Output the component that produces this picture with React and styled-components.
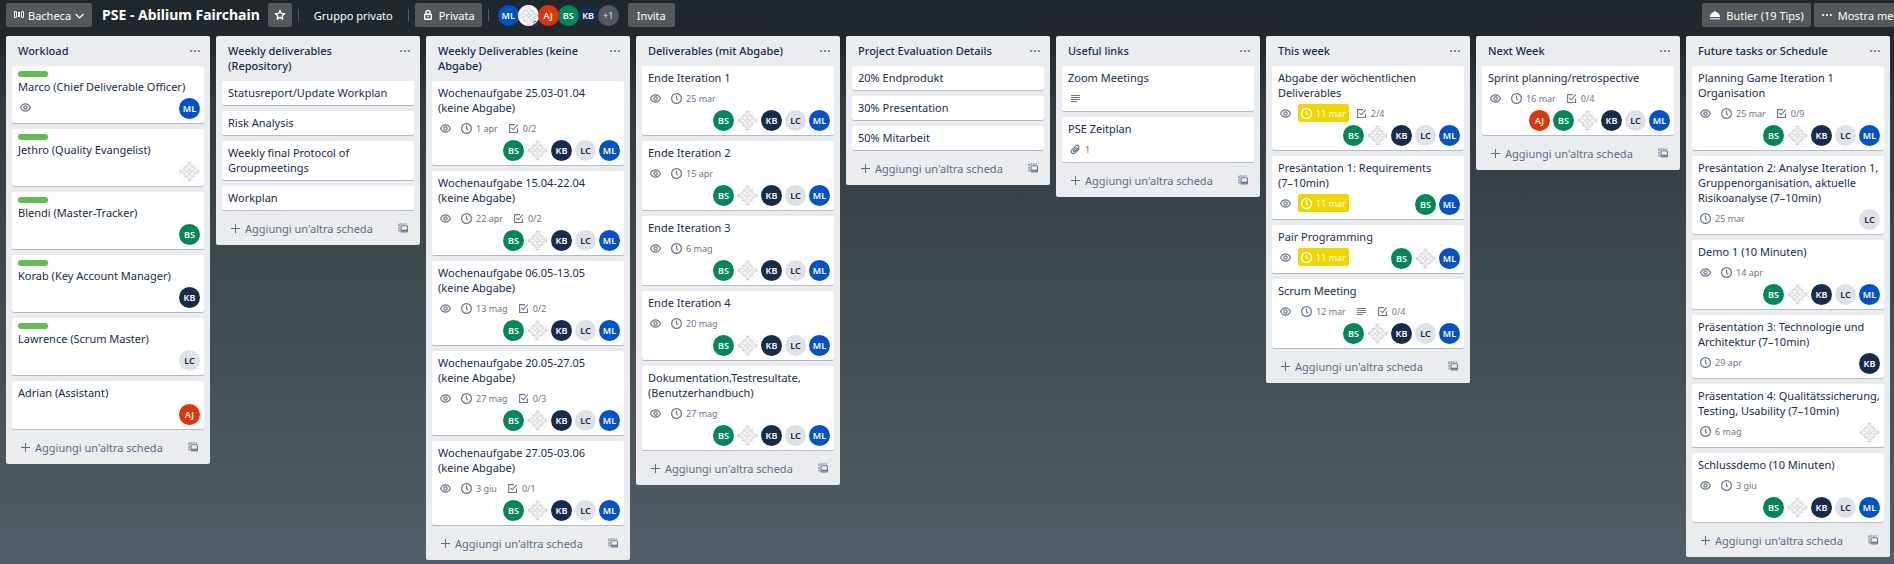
import React from "react";
import styled, { createGlobalStyle, css } from "styled-components";

const GlobalStyle = createGlobalStyle`
  *, *::before, *::after { box-sizing: border-box; }
  body {
    margin: 0;
    background: #4f5d66;
    font-family: "Noto Sans", "Open Sans", "Liberation Sans", sans-serif;
    font-size: 11px;
    line-height: 15px;
    color: #172b4d;
  }
  button { font: inherit; border: 0; margin: 0; padding: 0; cursor: pointer; }
  h1, h2, h3, ul { margin: 0; padding: 0; font-size: inherit; font-weight: inherit; }
  ul { list-style: none; }
  svg { display: block; flex: none; }
`;

const Page = styled.div`
  display: flex;
  flex-direction: column;
  gap: 6px;
  min-height: 100vh;
  overflow: hidden;
  background: linear-gradient(
    #20272c 0%,
    #23292e 9%,
    #323a40 18%,
    #394148 33%,
    #3d484d 45%,
    #445055 65%,
    #4b585e 84%,
    #505f66 100%
  );
`;

const TopBar = styled.header`
  display: flex;
  align-items: center;
  gap: 6px;
  padding: 3px 0 3px 6px;
  color: #fff;
  white-space: nowrap;
`;

const BarButton = styled.button`
  display: flex;
  align-items: center;
  justify-content: center;
  flex: none;
  gap: ${(p) => p.$gap || "0"};
  height: 24px;
  min-width: 24px;
  padding: 0 ${(p) => (p.$square ? "0" : p.$wide ? "9px" : "7px")};
  border-radius: 2px;
  background: #54595d;
  color: #fff;
`;

const BoardTitle = styled.h1`
  padding: 0 2px 0 4px;
  font-size: 14px;
  line-height: 24px;
  font-weight: 700;
`;

const Divider = styled.span`
  width: 1px;
  height: 12px;
  background: #545a5e;
`;

const TeamLink = styled.a`
  padding: 0 9px;
  color: #fff;
  text-decoration: none;
`;

const RightTools = styled.nav`
  display: flex;
  flex: none;
  gap: 3px;
  margin-left: auto;
  margin-right: -20px;
`;

const tones = {
  ML: ["#0052cc", "#fff"],
  AJ: ["#de350b", "#fff"],
  BS: ["#00875a", "#fff"],
  KB: ["#172b4d", "#fff"],
  LC: ["#dfe1e6", "#172b4d"],
  "+1": ["#54595d", "#dfe1e6"],
};

const Avatar = styled.span`
  display: flex;
  align-items: center;
  justify-content: center;
  position: relative;
  flex: none;
  width: 21px;
  height: 21px;
  border-radius: 50%;
  background: ${(p) => p.$bg};
  color: ${(p) => p.$fg};
  font-size: 9px;
  line-height: 21px;
  font-weight: ${(p) => (p.$light ? 400 : 600)};
`;

const MemberStack = styled.div`
  display: flex;
  padding: 0 3px;
  ${Avatar} + ${Avatar} { margin-left: -1px; }
`;

const AdminMark = styled.svg`
  position: absolute;
  right: 1px;
  bottom: 0;
`;

const Board = styled.main`
  display: flex;
  align-items: flex-start;
  gap: 6px;
  padding: 0 6px;
`;

const List = styled.section`
  flex: none;
  width: 204px;
  padding: 0 6px;
  border-radius: 2px;
  background: #ebecf0;
`;

const ListHeader = styled.div`
  display: flex;
  align-items: flex-start;
  padding: 7px 0 8px 6px;
`;

const ListTitle = styled.h2`
  flex: 1;
  padding-right: 10px;
  font-weight: 500;
`;

const IconButton = styled.button`
  display: flex;
  align-items: center;
  justify-content: center;
  width: 18px;
  height: 15px;
  background: none;
  color: #6b778c;
`;

const Cards = styled.ul`
  display: flex;
  flex-direction: column;
  gap: 6px;
`;

const CardLink = styled.a`
  display: block;
  padding: 4px 4px 4px 6px;
  border-radius: 2px;
  background: #fff;
  box-shadow: 0 1px 0 #b3bac9;
  color: inherit;
  text-decoration: none;
`;

const Label = styled.span`
  display: block;
  width: 30px;
  height: 6px;
  margin: 1px 0 2px;
  border-radius: 3px;
  background: #61bd4f;
`;

const CardTitle = styled.h3`
  padding-bottom: 1px;
  white-space: pre-line;
`;

const CardFooter = styled.div`
  display: flex;
  flex-wrap: wrap;
  align-items: flex-start;
  gap: 3px 8px;
  padding-top: 3px;
`;

const Badges = styled.div`
  display: flex;
  gap: 4px;
  margin-left: -1px;
`;

const Badge = styled.span`
  display: flex;
  align-items: center;
  gap: 2px;
  height: 18px;
  padding: 0 1px;
  border-radius: 2px;
  color: #6b778c;
  font-size: 9px;
  ${(p) => p.$text && css`padding-right: 3px;`}
  ${(p) => p.$due && css`
    background: #f2d600;
    color: #fff;
  `}
`;

const Members = styled.div`
  display: flex;
  gap: 3px;
  margin-left: auto;
`;

const ListFooter = styled.div`
  display: flex;
  align-items: center;
  justify-content: space-between;
  height: 35px;
  padding: 1px 1px 0 8px;
`;

const AddButton = styled.button`
  display: flex;
  align-items: center;
  gap: 4px;
  background: none;
  color: #5e6c84;
`;

const TemplateButton = styled(IconButton)`
  width: 20px;
`;

const Svg = ({ size = 15, children, ...rest }) => (
  <svg width={size} height={size} viewBox={`0 0 ${size} ${size}`} fill="none" stroke="currentColor" aria-hidden="true" {...rest}>
    {children}
  </svg>
);

const EyeIcon = () => (
  <Svg strokeWidth="1.2">
    <path d="M2.600 7.500C3.800 4.900 5.500 3.900 7.500 3.900s3.700 1 4.900 3.600c-1.200 2.600-2.900 3.600-4.900 3.600s-3.700-1-4.900-3.600z" />
    <circle cx="7.500" cy="7.500" r="1.700" />
  </Svg>
);

const ClockIcon = () => (
  <Svg strokeWidth="1.2">
    <circle cx="7.5" cy="7.5" r="4.900" />
    <path d="M7.500 4.500v3.300l1.600 1.300" />
  </Svg>
);

const CheckIcon = () => (
  <Svg strokeWidth="1.1">
    <path d="M9 3.600H3.600v7.900h7.900V7.500" />
    <path d="M5.300 6.800l2 2 4.400-5.100" />
  </Svg>
);

const TextIcon = () => (
  <Svg strokeWidth="1">
    <path d="M3 4.500h9M3 6.500h9M3 8.500h9M3 10.500h6" />
  </Svg>
);

const ClipIcon = () => (
  <Svg strokeWidth="1.1">
    <path d="M11.300 6.700l-4 4.100c-1.100 1.100-2.500 1.100-3.400.2s-.8-2.300.2-3.300l4-4c.7-.7 1.800-.7 2.400-.1s.6 1.700-.1 2.400L6.700 9.600c-.3.300-.8.300-1.100 0s-.3-.8 0-1.100l3.200-3.200" />
  </Svg>
);

const DotsIcon = () => (
  <Svg size={12} stroke="none" fill="currentColor">
    <circle cx="2.200" cy="6" r="1.100" />
    <circle cx="6" cy="6" r="1.100" />
    <circle cx="9.800" cy="6" r="1.100" />
  </Svg>
);

const PlusIcon = () => (
  <Svg size={11} strokeWidth="1">
    <path d="M5.500 1v9M1 5.500h9" />
  </Svg>
);

const TemplateIcon = () => (
  <Svg size={12} strokeWidth="1.100">
    <path d="M2 9.500v-7.500h8" strokeDasharray="2 .8" />
    <rect x="4" y="3.800" width="6.500" height="6.200" rx="1" />
    <path d="M4.300 8.600h6" strokeWidth="1.800" />
  </Svg>
);

const BoardIcon = () => (
  <Svg size={12} strokeWidth="1">
    <rect x="1.500" y="2.500" width="2" height="6" rx=".5" />
    <rect x="5.500" y="3.500" width="1" height="4" />
    <rect x="8.500" y="2.500" width="2" height="6" rx=".5" />
  </Svg>
);

const ChevronIcon = () => (
  <Svg size={11} strokeWidth="1.200">
    <path d="M1.500 4l4 4 4-4" />
  </Svg>
);

const StarIcon = () => (
  <Svg size={12} strokeWidth="1.300">
    <path d="M6 1.400l1.300 3 3.300.3-2.500 2.200.8 3.200L6 8.400l-2.900 1.700.8-3.200L1.400 4.700l3.300-.3z" strokeLinejoin="round" />
  </Svg>
);

const LockIcon = () => (
  <Svg size={12} strokeWidth="1.400">
    <path d="M4 5V3.500a2 2 0 0 1 4 0V5" />
    <rect x="2.700" y="5.200" width="6.600" height="5" rx=".5" />
    <path d="M6 6.800v1.800" />
  </Svg>
);

const ButlerIcon = () => (
  <Svg size={12} stroke="none" fill="currentColor">
    <path d="M1 8C1 5 3 3.200 5.200 2.900V2h1.600v.9C9 3.200 11 5 11 8z" />
    <path d="M1 9h10v1.500H1z" opacity=".7" />
  </Svg>
);

const Identicon = ({ $admin }) => (
  <Avatar $bg="#fff" role="img" aria-label="Membro">
    <svg width="21" height="21" viewBox="0 0 21 21">
      <circle cx="10.500" cy="10.500" r="10" fill="#fff" stroke="#f3f3f3" />
      <path d="M10.500 .5l10 10-10 10-10-10z" fill="#e6e6e6" />
      <path
        d="M10 4h1v3h-1zM10 14h1v3h-1zM4 10h3v1H4zM14 10h3v1h-3zM7 7h2v2H7zM12 7h2v2h-2zM7 12h2v2H7zM12 12h2v2h-2zM10 10h1v1h-1z"
        fill="#fbfbfb"
      />
      <path
        d="M9 1h3v1H9zM9 19h3v1H9zM1 9h1v3H1zM19 9h1v3h-1zM5 5h2v1H5zM14 5h2v1h-2zM5 15h2v1H5zM14 15h2v1h-2zM10 8h1v1h-1zM10 12h1v1h-1zM8 10h1v1H8zM12 10h1v1h-1z"
        fill="#d2d2d2"
      />
    </svg>
    {$admin && (
      <AdminMark width="6" height="6" viewBox="0 0 6 6" fill="none" stroke="#4a4fb5">
        <path d="M.5 3L3 1l2.500 2M.5 5.500L3 3.500l2.500 2" />
      </AdminMark>
    )}
  </Avatar>
);

const Member = ({ id, admin }) =>
  id === "ID" ? (
    <Identicon $admin={admin} />
  ) : (
    <Avatar $bg={tones[id][0]} $fg={tones[id][1]} $light={id === "+1"}>{id}</Avatar>
  );

const team = ["BS", "ID", "KB", "LC", "ML"];

const lists = [
  { title: "Workload", cards: [
    { label: true, title: "Marco (Chief Deliverable Officer)", eye: true, members: ["ML"] },
    { label: true, title: "Jethro (Quality Evangelist)", members: ["ID"] },
    { label: true, title: "Blendi (Master-Tracker)", members: ["BS"] },
    { label: true, title: "Korab (Key Account Manager)", members: ["KB"] },
    { label: true, title: "Lawrence (Scrum Master)", members: ["LC"] },
    { title: "Adrian (Assistant)", members: ["AJ"] },
  ] },
  { title: "Weekly deliverables (Repository)", cards: [
    { title: "Statusreport/Update Workplan" },
    { title: "Risk Analysis" },
    { title: "Weekly final Protocol of Groupmeetings" },
    { title: "Workplan" },
  ] },
  { title: "Weekly Deliverables (keine Abgabe)", cards: [
    { title: "Wochenaufgabe 25.03-01.04\n(keine Abgabe)", eye: true, date: "1 apr", check: "0/2", members: team },
    { title: "Wochenaufgabe 15.04-22.04\n(keine Abgabe)", eye: true, date: "22 apr", check: "0/2", members: team },
    { title: "Wochenaufgabe 06.05-13.05\n(keine Abgabe)", eye: true, date: "13 mag", check: "0/2", members: team },
    { title: "Wochenaufgabe 20.05-27.05\n(keine Abgabe)", eye: true, date: "27 mag", check: "0/3", members: team },
    { title: "Wochenaufgabe 27.05-03.06\n(keine Abgabe)", eye: true, date: "3 giu", check: "0/1", members: team },
  ] },
  { title: "Deliverables (mit Abgabe)", cards: [
    { title: "Ende Iteration 1", eye: true, date: "25 mar", members: team },
    { title: "Ende Iteration 2", eye: true, date: "15 apr", members: team },
    { title: "Ende Iteration 3", eye: true, date: "6 mag", members: team },
    { title: "Ende Iteration 4", eye: true, date: "20 mag", members: team },
    { title: "Dokumentation,Testresultate, (Benutzerhandbuch)", eye: true, date: "27 mag", members: team },
  ] },
  { title: "Project Evaluation Details", cards: [
    { title: "20% Endprodukt" },
    { title: "30% Presentation" },
    { title: "50% Mitarbeit" },
  ] },
  { title: "Useful links", cards: [
    { title: "Zoom Meetings", text: true },
    { title: "PSE Zeitplan", clip: "1" },
  ] },
  { title: "This week", cards: [
    { title: "Abgabe der wöchentlichen Deliverables", eye: true, date: "11 mar", due: true, check: "2/4", members: team },
    { title: "Presäntation 1: Requirements\n(7–10min)", eye: true, date: "11 mar", due: true, members: ["BS", "ML"] },
    { title: "Pair Programming", eye: true, date: "11 mar", due: true, members: ["BS", "ID", "ML"] },
    { title: "Scrum Meeting", eye: true, date: "12 mar", text: true, check: "0/4", members: team },
  ] },
  { title: "Next Week", cards: [
    { title: "Sprint planning/retrospective", eye: true, date: "16 mar", check: "0/4", members: ["AJ", ...team] },
  ] },
  { title: "Future tasks or Schedule", cards: [
    { title: "Planning Game Iteration 1 Organisation", eye: true, date: "25 mar", check: "0/9", members: team },
    { title: "Presäntation 2: Analyse Iteration 1, Gruppenorganisation, aktuelle Risikoanalyse (7–10min)", date: "25 mar", members: ["LC"] },
    { title: "Demo 1 (10 Minuten)", eye: true, date: "14 apr", members: team },
    { title: "Präsentation 3: Technologie und Architektur (7–10min)", date: "29 apr", members: ["KB"] },
    { title: "Präsentation 4: Qualitätssicherung, Testing, Usability (7–10min)", date: "6 mag", members: ["ID"] },
    { title: "Schlussdemo (10 Minuten)", eye: true, date: "3 giu", members: team },
  ] },
];

function Card({ card }) {
  const { label, title, eye, date, due, text, clip, check, members } = card;
  const hasBadges = eye || date || text || clip || check;
  return (
    <li>
      <CardLink href="#">
        {label && <Label />}
        <CardTitle>{title}</CardTitle>
        {(hasBadges || members) && (
          <CardFooter>
            {hasBadges && (
              <Badges>
                {eye && <Badge><EyeIcon /></Badge>}
                {date && <Badge $text $due={due}><ClockIcon />{date}</Badge>}
                {text && <Badge><TextIcon /></Badge>}
                {clip && <Badge $text><ClipIcon />{clip}</Badge>}
                {check && <Badge $text><CheckIcon />{check}</Badge>}
              </Badges>
            )}
            {members && (
              <Members>
                {members.map((id) => <Member key={id} id={id} />)}
              </Members>
            )}
          </CardFooter>
        )}
      </CardLink>
    </li>
  );
}

export default function App() {
  return (
    <>
      <GlobalStyle />
      <Page>
        <TopBar>
          <BarButton $gap="3px"><BoardIcon />Bacheca<ChevronIcon /></BarButton>
          <BoardTitle>PSE - Abilium Fairchain</BoardTitle>
          <BarButton $square aria-label="Preferita"><StarIcon /></BarButton>
          <Divider />
          <TeamLink href="#">Gruppo privato</TeamLink>
          <Divider />
          <BarButton $gap="5px"><LockIcon />Privata</BarButton>
          <Divider />
          <MemberStack>
            <Member id="ML" />
            <Member id="ID" admin />
            <Member id="AJ" />
            <Member id="BS" />
            <Member id="KB" />
            <Member id="+1" />
          </MemberStack>
          <BarButton $wide>Invita</BarButton>
          <RightTools>
            <BarButton $gap="5px"><ButlerIcon />Butler (19 Tips)</BarButton>
            <BarButton $gap="5px"><DotsIcon />Mostra menu</BarButton>
          </RightTools>
        </TopBar>
        <Board>
          {lists.map((list) => (
            <List key={list.title}>
              <ListHeader>
                <ListTitle>{list.title}</ListTitle>
                <IconButton aria-label="Azioni lista"><DotsIcon /></IconButton>
              </ListHeader>
              <Cards>
                {list.cards.map((card) => <Card key={card.title} card={card} />)}
              </Cards>
              <ListFooter>
                <AddButton><PlusIcon />Aggiungi un'altra scheda</AddButton>
                <TemplateButton aria-label="Crea da modello"><TemplateIcon /></TemplateButton>
              </ListFooter>
            </List>
          ))}
        </Board>
      </Page>
    </>
  );
}
